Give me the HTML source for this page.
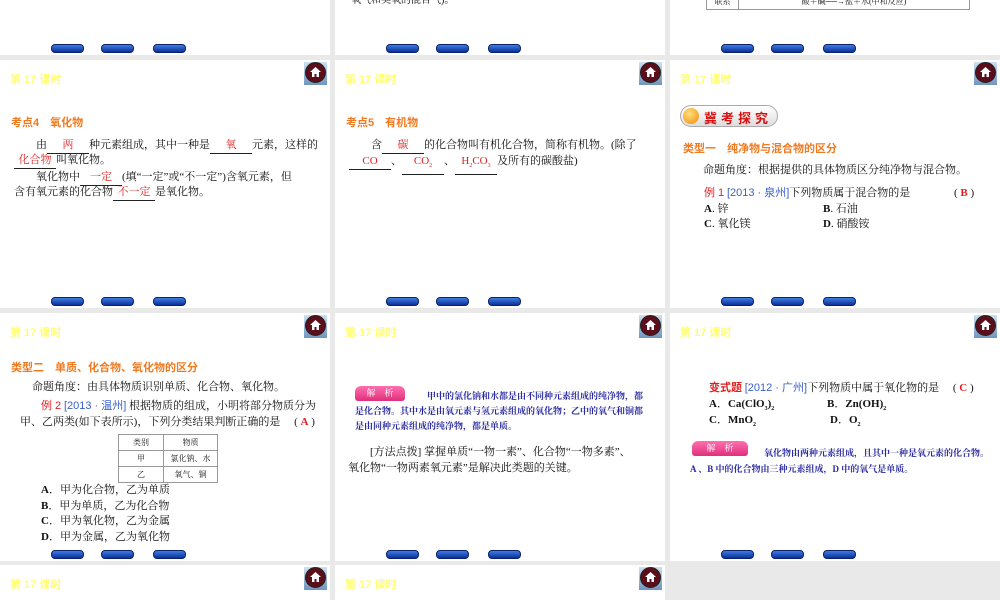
<!DOCTYPE html>
<html style="width:1000px;height:600px;overflow:hidden"><head><meta charset="utf-8">
<style>
*{margin:0;padding:0;box-sizing:border-box}
body{width:1000px;height:600px;overflow:hidden;background:#e9e9e9;position:relative;font-family:"Liberation Serif","Noto Serif CJK SC",serif;color:#111}
.s{position:absolute;width:330px;height:248px;background:#fff;overflow:hidden}
.s>*{position:absolute;white-space:nowrap}
.hd{left:10px;top:11px;font:bold 11px "Liberation Sans","Noto Sans CJK SC",sans-serif;color:#ffff70}
.home{left:304px;top:2px;width:23px;height:23px;background:linear-gradient(#cfe0f0,#6f95c0)}
.home i{position:absolute;left:1px;top:0;width:21px;height:21px;border-radius:50%;background:#5a0f1a;border:1px solid #222}
.home svg{position:absolute;left:5px;top:4px}
.nb{top:237px;width:33px;height:9px;border-radius:4px;background:linear-gradient(#3d7ee0,#0c2f9a);border:1px solid #0a2070}
.or{font:bold 11px "Liberation Sans","Noto Sans CJK SC",sans-serif;color:#f07a20}
.t{font-size:11px;line-height:15px}
.r{color:#e02020}
.u{display:inline-block;border-bottom:1px solid #222;text-align:center;color:#e02020}
.bl{color:#2a2aa0;font-size:9px;font-weight:bold}
.jx{width:50px;height:15px;background:linear-gradient(#ff6fb0,#e0307a);border-radius:6px 6px 3px 3px;color:#fff;font-size:9px;text-align:center;line-height:15px}
.tb{border-collapse:collapse;font-size:8px}
.tb td{border:1px solid #999;text-align:center;height:16px}
</style></head><body>

<!-- row1 -->
<div class="s" style="left:0;top:-193px">
<div class="nb" style="left:51px"></div><div class="nb" style="left:101px"></div><div class="nb" style="left:153px"></div>
</div>
<div class="s" style="left:335px;top:-193px">
<div class="t" style="left:16px;top:186px;font-size:10px">氧气和臭氧的混合气)。</div>
<div class="nb" style="left:51px"></div><div class="nb" style="left:101px"></div><div class="nb" style="left:153px"></div>
</div>
<div class="s" style="left:670px;top:-193px">
<table class="tb" style="position:absolute;left:36px;top:186px;width:264px"><tr><td style="width:32px">联系</td><td>酸＋碱──→盐＋水(中和反应)</td></tr></table>
<div class="nb" style="left:51px"></div><div class="nb" style="left:101px"></div><div class="nb" style="left:153px"></div>
</div>

<!-- row2 -->
<div class="s" style="left:0;top:60px">
<div class="hd">第 17 课时</div><div class="home"><i></i><svg width="13" height="12" viewBox="0 0 13 12"><path d="M6.5 1L1 6h2v5h2.5V8h2v3H10V6h2z" fill="#fff"/></svg></div>
<div class="or" style="left:11px;top:54px">考点4　氧化物</div>
<div class="t" style="left:36px;top:78px">由<span class="u" style="width:42px">两</span>种元素组成，其中一种是<span class="u" style="width:42px">氧</span>元素，这样的</div>
<div class="t" style="left:14px;top:93px"><span class="u" style="width:42px">化合物</span>叫氧化物。</div>
<div class="t" style="left:36px;top:110px">氧化物中<span class="u" style="width:42px">一定</span>(填“一定”或“不一定”)含氧元素，但</div>
<div class="t" style="left:14px;top:125px">含有氧元素的化合物<span class="u" style="width:42px">不一定</span>是氧化物。</div>
<div class="nb" style="left:51px"></div><div class="nb" style="left:101px"></div><div class="nb" style="left:153px"></div>
</div>
<div class="s" style="left:335px;top:60px">
<div class="hd">第 17 课时</div><div class="home"><i></i><svg width="13" height="12" viewBox="0 0 13 12"><path d="M6.5 1L1 6h2v5h2.5V8h2v3H10V6h2z" fill="#fff"/></svg></div>
<div class="or" style="left:11px;top:54px">考点5　有机物</div>
<div class="t" style="left:36px;top:78px">含<span class="u" style="width:42px">碳</span>的化合物叫有机化合物，简称有机物。(除了</div>
<div class="t" style="left:14px;top:94px"><span class="u" style="width:42px">CO</span>、<span class="u" style="width:42px">CO<sub style="font-size:6px">2</sub></span>、<span class="u" style="width:42px">H<sub style="font-size:6px">2</sub>CO<sub style="font-size:6px">3</sub></span>及所有的碳酸盐)</div>
<div class="nb" style="left:51px"></div><div class="nb" style="left:101px"></div><div class="nb" style="left:153px"></div>
</div>
<div class="s" style="left:670px;top:60px">
<div class="hd">第 17 课时</div><div class="home"><i></i><svg width="13" height="12" viewBox="0 0 13 12"><path d="M6.5 1L1 6h2v5h2.5V8h2v3H10V6h2z" fill="#fff"/></svg></div>
<div style="left:10px;top:45px;width:98px;height:22px;border-radius:11px;background:linear-gradient(#fff,#ddd);border:1px solid #aaa"></div>
<div style="left:13px;top:48px;width:16px;height:16px;border-radius:50%;background:radial-gradient(circle at 40% 35%,#ffe080,#f08a00)"></div>
<div style="left:34px;top:48px;font:bold 13px 'Noto Sans CJK SC',sans-serif;color:#d81010;letter-spacing:4px">冀考探究</div>
<div class="or" style="left:13px;top:80px">类型一　纯净物与混合物的区分</div>
<div class="t" style="left:33px;top:103px">命题角度：根据提供的具体物质区分纯净物与混合物。</div>
<div class="t" style="left:34px;top:126px"><span class="r" style="font-family:'Liberation Sans','Noto Sans CJK SC'">例 1</span> <span style="color:#3a5fc8;font-family:'Liberation Sans','Noto Sans CJK SC'">[2013 · 泉州]</span>下列物质属于混合物的是</div>
<div class="t" style="left:284px;top:126px">( <b class="r">B</b> )</div>
<div class="t" style="left:34px;top:142px"><b>A</b>. 锌</div><div class="t" style="left:153px;top:142px"><b>B</b>. 石油</div>
<div class="t" style="left:34px;top:157px"><b>C</b>. 氧化镁</div><div class="t" style="left:153px;top:157px"><b>D</b>. 硝酸铵</div>
<div class="nb" style="left:51px"></div><div class="nb" style="left:101px"></div><div class="nb" style="left:153px"></div>
</div>

<!-- row3 -->
<div class="s" style="left:0;top:313px">
<div class="hd">第 17 课时</div><div class="home"><i></i><svg width="13" height="12" viewBox="0 0 13 12"><path d="M6.5 1L1 6h2v5h2.5V8h2v3H10V6h2z" fill="#fff"/></svg></div>
<div class="or" style="left:11px;top:46px">类型二　单质、化合物、氧化物的区分</div>
<div class="t" style="left:32px;top:67px">命题角度：由具体物质识别单质、化合物、氧化物。</div>
<div class="t" style="left:41px;top:86px"><span class="r" style="font-family:'Liberation Sans','Noto Sans CJK SC'">例 2</span> <span style="color:#3a5fc8;font-family:'Liberation Sans','Noto Sans CJK SC'">[2013 · 温州]</span> 根据物质的组成，小明将部分物质分为</div>
<div class="t" style="left:20px;top:102px">甲、乙两类(如下表所示)，下列分类结果判断正确的是　 ( <b class="r">A</b> )</div>
<table class="tb" style="position:absolute;left:118px;top:121px;width:100px"><tr><td style="width:45px">类别</td><td>物质</td></tr><tr><td>甲</td><td>氯化钠、水</td></tr><tr><td>乙</td><td>氧气、铜</td></tr></table>
<div class="t" style="left:41px;top:170px"><b>A</b>．甲为化合物，乙为单质</div>
<div class="t" style="left:41px;top:186px"><b>B</b>．甲为单质，乙为化合物</div>
<div class="t" style="left:41px;top:201px"><b>C</b>．甲为氧化物，乙为金属</div>
<div class="t" style="left:41px;top:217px"><b>D</b>．甲为金属，乙为氧化物</div>
<div class="nb" style="left:51px"></div><div class="nb" style="left:101px"></div><div class="nb" style="left:153px"></div>
</div>
<div class="s" style="left:335px;top:313px">
<div class="hd">第 17 课时</div><div class="home"><i></i><svg width="13" height="12" viewBox="0 0 13 12"><path d="M6.5 1L1 6h2v5h2.5V8h2v3H10V6h2z" fill="#fff"/></svg></div>
<div class="jx" style="left:20px;top:73px">解　析</div>
<div class="bl" style="left:92px;top:76px">甲中的氯化钠和水都是由不同种元素组成的纯净物，都</div>
<div class="bl" style="left:20px;top:91px">是化合物。其中水是由氧元素与氢元素组成的氧化物；乙中的氧气和铜都</div>
<div class="bl" style="left:20px;top:106px">是由同种元素组成的纯净物，都是单质。</div>
<div class="t" style="left:35px;top:132px">[方法点拨] 掌握单质“一物一素”、化合物“一物多素”、</div>
<div class="t" style="left:13px;top:148px">氧化物“一物两素氧元素”是解决此类题的关键。</div>
<div class="nb" style="left:51px"></div><div class="nb" style="left:101px"></div><div class="nb" style="left:153px"></div>
</div>
<div class="s" style="left:670px;top:313px">
<div class="hd">第 17 课时</div><div class="home"><i></i><svg width="13" height="12" viewBox="0 0 13 12"><path d="M6.5 1L1 6h2v5h2.5V8h2v3H10V6h2z" fill="#fff"/></svg></div>
<div class="t" style="left:39px;top:67px"><b class="r" style="font-family:'Noto Sans CJK SC'">变式题</b> <span style="color:#3a5fc8;font-family:'Liberation Sans','Noto Sans CJK SC'">[2012 · 广州]</span>下列物质中属于氧化物的是　 ( <b class="r">C</b> )</div>
<div class="t" style="left:39px;top:84px"><b>A</b>．<b>Ca(ClO<sub style="font-size:6px">3</sub>)<sub style="font-size:6px">2</sub></b></div>
<div class="t" style="left:157px;top:84px"><b>B</b>．<b>Zn(OH)<sub style="font-size:6px">2</sub></b></div>
<div class="t" style="left:39px;top:100px"><b>C</b>．<b>MnO<sub style="font-size:6px">2</sub></b></div>
<div class="t" style="left:160px;top:100px"><b>D</b>．<b>O<sub style="font-size:6px">2</sub></b></div>
<div class="jx" style="left:22px;top:128px;width:56px">解　析</div>
<div class="bl" style="left:94px;top:133px">氧化物由两种元素组成，且其中一种是氧元素的化合物。</div>
<div class="bl" style="left:20px;top:149px">A 、B 中的化合物由三种元素组成，D 中的氧气是单质。</div>
<div class="nb" style="left:51px"></div><div class="nb" style="left:101px"></div><div class="nb" style="left:153px"></div>
</div>

<!-- row4 -->
<div class="s" style="left:0;top:565px;height:35px">
<div class="hd">第 17 课时</div><div class="home"><i></i><svg width="13" height="12" viewBox="0 0 13 12"><path d="M6.5 1L1 6h2v5h2.5V8h2v3H10V6h2z" fill="#fff"/></svg></div>
</div>
<div class="s" style="left:335px;top:565px;height:35px">
<div class="hd">第 17 课时</div><div class="home"><i></i><svg width="13" height="12" viewBox="0 0 13 12"><path d="M6.5 1L1 6h2v5h2.5V8h2v3H10V6h2z" fill="#fff"/></svg></div>
</div>
</body></html>
